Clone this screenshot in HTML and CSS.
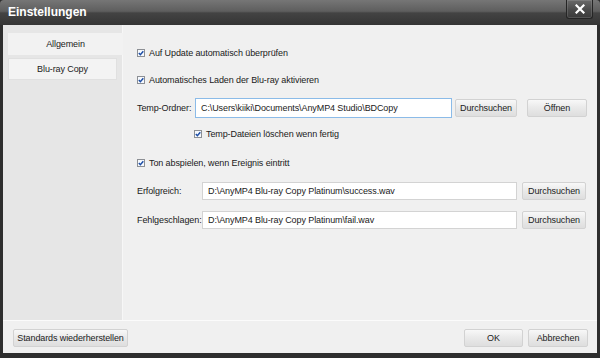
FILE: index.html
```html
<!DOCTYPE html>
<html lang="de">
<head>
<meta charset="utf-8">
<title>Einstellungen</title>
<link rel="stylesheet" href="styles.css">
</head>
<body>
<div class="window">
  <div class="titlebar">
    <span class="title">Einstellungen</span>
    <div class="close"><svg width="10" height="10" viewBox="0 0 10 10"><path d="M1.5 1.5 L8.5 8.5 M8.5 1.5 L1.5 8.5" stroke="#fff" stroke-width="2.2" stroke-linecap="square"/></svg></div>
  </div>
  <div class="frame">
    <div class="main">
      <nav class="sidebar">
        <div class="tab active">Allgemein</div>
        <div class="tab other">Blu-ray Copy</div>
      </nav>
      <section class="content">
        <div class="check row1"><svg class="cb" width="8" height="8" viewBox="0 0 8 8"><rect x="0.5" y="0.5" width="7" height="7" fill="#f6f9fd" stroke="#8c8f94"/><path d="M1.8 4 L3.4 5.7 L6.3 2.2" fill="none" stroke="#1f4fa6" stroke-width="1.5"/></svg><span>Auf Update automatisch überprüfen</span></div>
        <div class="check row2"><svg class="cb" width="8" height="8" viewBox="0 0 8 8"><rect x="0.5" y="0.5" width="7" height="7" fill="#f6f9fd" stroke="#8c8f94"/><path d="M1.8 4 L3.4 5.7 L6.3 2.2" fill="none" stroke="#1f4fa6" stroke-width="1.5"/></svg><span>Automatisches Laden der Blu-ray aktivieren</span></div>
        <div class="fieldrow temp">
          <span class="lbl lbl-temp">Temp-Ordner:</span>
          <div class="field focus w-temp">C:\Users\kiiki\Documents\AnyMP4 Studio\BDCopy</div>
          <div class="btn b-such1">Durchsuchen</div>
          <div class="btn b-open">Öffnen</div>
        </div>
        <div class="check row-del"><svg class="cb" width="8" height="8" viewBox="0 0 8 8"><rect x="0.5" y="0.5" width="7" height="7" fill="#f6f9fd" stroke="#8c8f94"/><path d="M1.8 4 L3.4 5.7 L6.3 2.2" fill="none" stroke="#1f4fa6" stroke-width="1.5"/></svg><span>Temp-Dateien löschen wenn fertig</span></div>
        <div class="check row-ton"><svg class="cb" width="8" height="8" viewBox="0 0 8 8"><rect x="0.5" y="0.5" width="7" height="7" fill="#f6f9fd" stroke="#8c8f94"/><path d="M1.8 4 L3.4 5.7 L6.3 2.2" fill="none" stroke="#1f4fa6" stroke-width="1.5"/></svg><span>Ton abspielen, wenn Ereignis eintritt</span></div>
        <div class="fieldrow sound s1">
          <span class="lbl lbl-snd">Erfolgreich:</span>
          <div class="field w-snd">D:\AnyMP4 Blu-ray Copy Platinum\success.wav</div>
          <div class="btn b-such2">Durchsuchen</div>
        </div>
        <div class="fieldrow sound s2">
          <span class="lbl lbl-snd">Fehlgeschlagen:</span>
          <div class="field w-snd">D:\AnyMP4 Blu-ray Copy Platinum\fail.wav</div>
          <div class="btn b-such2">Durchsuchen</div>
        </div>
      </section>
    </div>
    <div class="footer">
      <div class="btn b-reset">Standards wiederherstellen</div>
      <div class="spacer"></div>
      <div class="btn b-ok">OK</div>
      <div class="btn b-cancel">Abbrechen</div>
    </div>
  </div>
</div>
</body>
</html>
```
FILE: styles.css
```css
* { box-sizing: border-box; }
html, body { margin: 0; padding: 0; background: #2d2d2d; }
body {
  font-family: "Liberation Sans", Arial, sans-serif;
  font-size: 9px;
  letter-spacing: -0.1px;
  color: #1a1a1a;
}
.window {
  width: 600px;
  height: 358px;
  background: #2e2e2e;
  display: flex;
  flex-direction: column;
  border-radius: 4px 4px 0 0;
  overflow: hidden;
}
.titlebar {
  height: 25px;
  flex: none;
  display: flex;
  align-items: flex-start;
  padding-left: 8px;
  background: linear-gradient(#767676 0%, #5e5e5e 45%, #434343 52%, #353535 100%);
}
.title {
  font-size: 12px;
  letter-spacing: 0;
  font-weight: bold;
  color: #fff;
  line-height: 25px;
}
.close {
  margin-left: auto;
  margin-right: 7px;
  width: 27px;
  height: 19px;
  border: 1px solid #252525;
  border-top: none;
  border-radius: 0 0 3px 3px;
  box-shadow: inset 0 0 0 1px rgba(255,255,255,0.13);
  background: linear-gradient(#6a6a6a, #4a4a4a 55%, #3a3a3a);
  display: flex;
  align-items: center;
  justify-content: center;
}
.frame {
  flex: 1;
  margin: 0 3px 5px;
  background: #f0f0f0;
  display: flex;
  flex-direction: column;
}
.main {
  height: 295px;
  flex: none;
  display: flex;
}
.sidebar {
  width: 120px;
  flex: none;
  background: #e6e6e6;
  border-right: 1px solid #f7f7f7;
  padding: 8px 0 0 5px;
  display: flex;
  flex-direction: column;
}
.tab {
  height: 22px;
  line-height: 22px;
  text-align: center;
}
.tab.active {
  background: #f2f2f2;
  margin-right: -1px;
}
.tab.other {
  margin-top: 3px;
  width: 109px;
  background: #f3f3f3;
  border: 1px solid #e0e0e0;
  line-height: 20px;
}
.content {
  flex: 1;
  padding: 20px 10px 0 14px;
  display: flex;
  flex-direction: column;
}
.check {
  height: 16px;
  display: flex;
  align-items: center;
}
.cb { flex: none; margin-right: 4px; }
.row2 { margin-top: 11px; }
.row-del { margin-top: 8px; margin-left: 57px; }
.row-ton { margin-top: 13px; }
.fieldrow {
  display: flex;
  align-items: center;
}
.temp { margin-top: 10px; height: 20px; }
.sound { height: 18px; margin-top: 11px; }
.lbl { flex: none; }
.lbl-temp { width: 58px; }
.lbl-snd { width: 65px; }
.field {
  background: #fff;
  border: 1px solid #d3d3d3;
  padding-left: 5px;
  white-space: nowrap;
  overflow: hidden;
  display: flex;
  align-items: center;
}
.field.focus { border-color: #8bbbe8; }
.w-temp { width: 257px; height: 20px; }
.w-snd { width: 315px; height: 18px; }
.btn {
  height: 18px;
  flex: none;
  border: 1px solid #d2d2d2;
  border-radius: 2px;
  background: linear-gradient(#f8f8f8, #e9e9e9 50%, #dedede);
  display: flex;
  align-items: center;
  justify-content: center;
  color: #222;
  white-space: nowrap;
}
.b-such1 { width: 62px; margin-left: 3px; }
.b-open { width: 60px; margin-left: 10px; }
.b-such2 { width: 64px; margin-left: 5px; }
.footer {
  flex: 1;
  border-top: 1px solid #fbfbfb;
  display: flex;
  align-items: flex-start;
  padding: 8px 9px 0 10px;
}
.spacer { flex: 1; }
.b-reset { width: 115px; }
.b-ok { width: 59px; }
.b-cancel { width: 60px; margin-left: 5px; }
```
